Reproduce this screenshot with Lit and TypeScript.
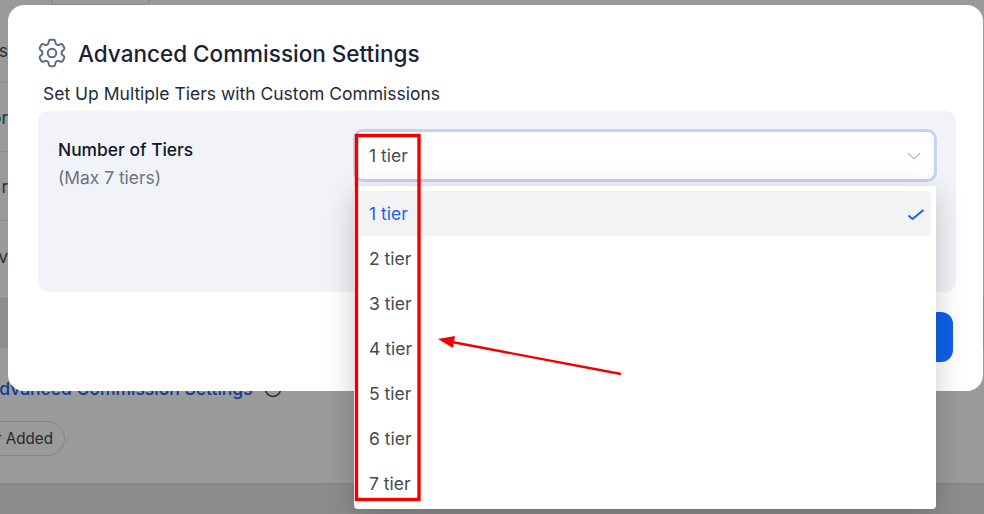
import { LitElement, html, css, svg } from "lit";
import { customElement } from "lit/decorators.js";

const TIERS = [1, 2, 3, 4, 5, 6, 7];

@customElement("app-root")
export class AppRoot extends LitElement {
  static styles = css`
    :host {
      display: block;
      width: 984px;
      height: 514px;
      position: relative;
      overflow: hidden;
      background: #999a9b;
      font-family: Inter, "Liberation Sans", sans-serif;
      color: #111827;
    }
    .page {
      height: 514px;
      display: flex;
      flex-direction: column;
      background: #9a9a9a;
    }
    .top-edge {
      height: 5px;
      margin-left: 51px;
      width: 99px;
      flex: none;
      border-left: 1px solid #858585;
      border-right: 1px solid #858585;
      border-bottom: 1px solid #858585;
      border-radius: 0 0 5px 0;
      box-sizing: border-box;
    }
    .cut-rows {
      margin-top: 13px;
      display: flex;
      flex-direction: column;
      font-size: 17.5px;
      color: #2b2f36;
    }
    .cut-row {
      height: 69px;
      width: 984px;
      box-sizing: border-box;
      border-bottom: 1px solid #8f8f8f;
      display: flex;
      align-items: center;
    }
    .cut-row.first { height: 65px; }
    .cut-row.last {
      height: 77px;
      padding-bottom: 7px;
      border-bottom: none;
    }
    .cut-row span {
      width: 8px;
      display: flex;
      justify-content: flex-end;
      white-space: nowrap;
    }
    .band {
      height: 50px;
      flex: none;
      box-sizing: border-box;
      background: #8e8e8e;
      border-top: 1px solid #858585;
    }
    .bg-link {
      margin-top: 30px;
      margin-left: -13px;
      display: flex;
      align-items: center;
      gap: 11px;
      font-size: 17.5px;
      line-height: 22px;
      color: #0a3a98;
      font-weight: 500;
      white-space: nowrap;
    }
    .bg-link svg { width: 18px; height: 18px; }
    .pill {
      margin-top: 21px;
      margin-left: -34px;
      width: 99px;
      height: 35px;
      flex: none;
      box-sizing: border-box;
      border: 1px solid #858585;
      border-radius: 18px;
      display: flex;
      align-items: center;
      font-size: 15.2px;
      font-weight: 400;
      color: #25282d;
      white-space: nowrap;
      justify-content: flex-end;
      padding-right: 11px;
    }
    .footer {
      margin-top: 27px;
      flex: 1;
      border-top: 2px solid #888888;
      background: #8b8c8e;
    }
    .modal {
      position: absolute;
      left: 8px;
      top: 5px;
      width: 975px;
      height: 386px;
      box-sizing: border-box;
      background: #fff;
      border-radius: 16px;
      padding: 32px 27px 0 30px;
      display: flex;
      flex-direction: column;
    }
    .title-row {
      display: flex;
      align-items: center;
      gap: 10px;
      height: 32px;
    }
    .title-row svg { width: 32px; height: 32px; flex: none; margin-left: -2px; }
    .title {
      font-size: 22.5px;
      font-weight: 500;
      color: #1a2233;
      white-space: nowrap;
    }
    .sub {
      margin: 15px 0 0 5px;
      font-size: 17.5px;
      line-height: 20px;
      color: #1f2937;
      white-space: nowrap;
    }
    .panel {
      margin-top: 7px;
      height: 181px;
      box-sizing: border-box;
      background: #f1f3f8;
      border-radius: 10px;
      padding: 18px 19px 0 20px;
      display: flex;
    }
    .labels { width: 295px; flex: none; padding-top: 11px; }
    .label {
      font-size: 17.4px;
      line-height: 20px;
      font-weight: 500;
      color: #111827;
    }
    .hint {
      margin-top: 8px;
      font-size: 17.4px;
      line-height: 20px;
      color: #6b7280;
    }
    .select {
      width: 584px;
      height: 53px;
      box-sizing: border-box;
      background: #fff;
      border: 3px solid #c3d3f1;
      border-radius: 10px;
      display: flex;
      align-items: center;
      justify-content: space-between;
      padding: 0 13px 0 13px;
      font-size: 17.5px;
      color: #4b4b4b;
    }
    .select svg { width: 14px; height: 14px; }
    .actions {
      display: flex;
      justify-content: flex-end;
      margin-top: 20px;
      margin-right: 3px;
    }
    .save {
      width: 140px;
      height: 50px;
      background: #1060e8;
      border-radius: 12px;
    }
    .menu {
      position: absolute;
      left: 354px;
      top: 186px;
      width: 582px;
      height: 323px;
      box-sizing: border-box;
      background: #fff;
      border-radius: 0 0 4px 4px;
      padding: 5px;
      display: flex;
      flex-direction: column;
      box-shadow: 0 8px 30px rgba(0, 0, 0, 0.2);
    }
    .item {
      height: 45px;
      flex: none;
      display: flex;
      align-items: center;
      justify-content: space-between;
      padding: 0 6.5px 0 10px;
      font-size: 17.5px;
      color: #474a50;
      border-radius: 4px;
    }
    .item.on {
      background: #f3f3f6;
      color: #1c5fe8;
    }
    .item svg { width: 18px; height: 14px; }
    .note {
      position: absolute;
      left: 0;
      top: 0;
      width: 984px;
      height: 514px;
      pointer-events: none;
    }
  `;

  render() {
    return html`
      <div class="page">
        <div class="top-edge"></div>
        <div class="cut-rows">
          <div class="cut-row first"><span>s</span></div>
          <div class="cut-row"><span>or</span></div>
          <div class="cut-row"><span>r</span></div>
          <div class="cut-row last"><span>v</span></div>
        </div>
        <div class="band"></div>
        <div class="bg-link">
          <span>Advanced Commission Settings</span>
          <svg viewBox="0 0 18 18" fill="none" stroke="#20242c" stroke-width="1.6"><circle cx="9" cy="9" r="7.5"></circle></svg>
        </div>
        <div class="pill"><span>r Added</span></div>
        <div class="footer"></div>
      </div>

      <section class="modal">
        <div class="title-row">
          <svg viewBox="0 0 24 24" fill="none" stroke="#5d6b85" stroke-width="1.5" stroke-linecap="round" stroke-linejoin="round">
            <path d="M9.6 3.2c.1-.7.7-1.2 1.4-1.2h2c.7 0 1.3.5 1.4 1.2l.2 1.3c.1.5.4.9.8 1.1l.4.2c.4.2.9.3 1.4.1l1.2-.5c.7-.2 1.4.1 1.7.6l1 1.8c.4.6.2 1.3-.3 1.8l-1 .8c-.4.3-.6.8-.6 1.3v.5c0 .5.2 1 .6 1.3l1 .8c.5.5.7 1.2.3 1.8l-1 1.8c-.3.5-1 .8-1.7.6l-1.2-.5c-.5-.2-1-.1-1.4.1l-.4.2c-.4.2-.7.6-.8 1.1l-.2 1.3c-.1.7-.7 1.2-1.4 1.2h-2c-.7 0-1.3-.5-1.4-1.2l-.2-1.3c-.1-.5-.4-.9-.8-1.1l-.4-.2c-.4-.2-.9-.3-1.4-.1l-1.2.5c-.7.2-1.4-.1-1.7-.6l-1-1.8c-.4-.6-.2-1.3.3-1.8l1-.8c.4-.3.6-.8.6-1.3v-.5c0-.5-.2-1-.6-1.3l-1-.8c-.5-.5-.7-1.2-.3-1.8l1-1.8c.3-.5 1-.8 1.7-.6l1.2.5c.5.2 1 .1 1.4-.1l.4-.2c.4-.2.7-.6.8-1.1z"></path>
            <circle cx="12" cy="12" r="3.2"></circle>
          </svg>
          <div class="title">Advanced Commission Settings</div>
        </div>
        <div class="sub">Set Up Multiple Tiers with Custom Commissions</div>
        <div class="panel">
          <div class="labels">
            <div class="label">Number of Tiers</div>
            <div class="hint">(Max 7 tiers)</div>
          </div>
          <div class="select">
            <span>1 tier</span>
            <svg viewBox="0 0 14 14" fill="none" stroke="#b9b9b9" stroke-width="1.2"><path d="M1 4l6 6 6-6"></path></svg>
          </div>
        </div>
        <div class="actions"><div class="save"></div></div>
      </section>

      <div class="menu">
        ${TIERS.map(
          (n) => html`<div class="item ${n === 1 ? "on" : ""}">
            <span>${n} tier</span>
            ${n === 1
              ? html`<svg viewBox="0 0 18 14" fill="none" stroke="#1c5fe8" stroke-width="2"><path d="M1.5 8.5l4 3.5L16.5 3"></path></svg>`
              : ""}
          </div>`
        )}
      </div>

      <svg class="note" viewBox="0 0 984 514">
        ${svg`
          <rect x="356.5" y="135.5" width="62.5" height="364" fill="none" stroke="#f10000" stroke-width="3.4"></rect>
          <line x1="621" y1="374" x2="452" y2="342" stroke="#f10000" stroke-width="2.4"></line>
          <polygon points="438,339 455,336 453,348" fill="#f10000"></polygon>
        `}
      </svg>
    `;
  }
}
